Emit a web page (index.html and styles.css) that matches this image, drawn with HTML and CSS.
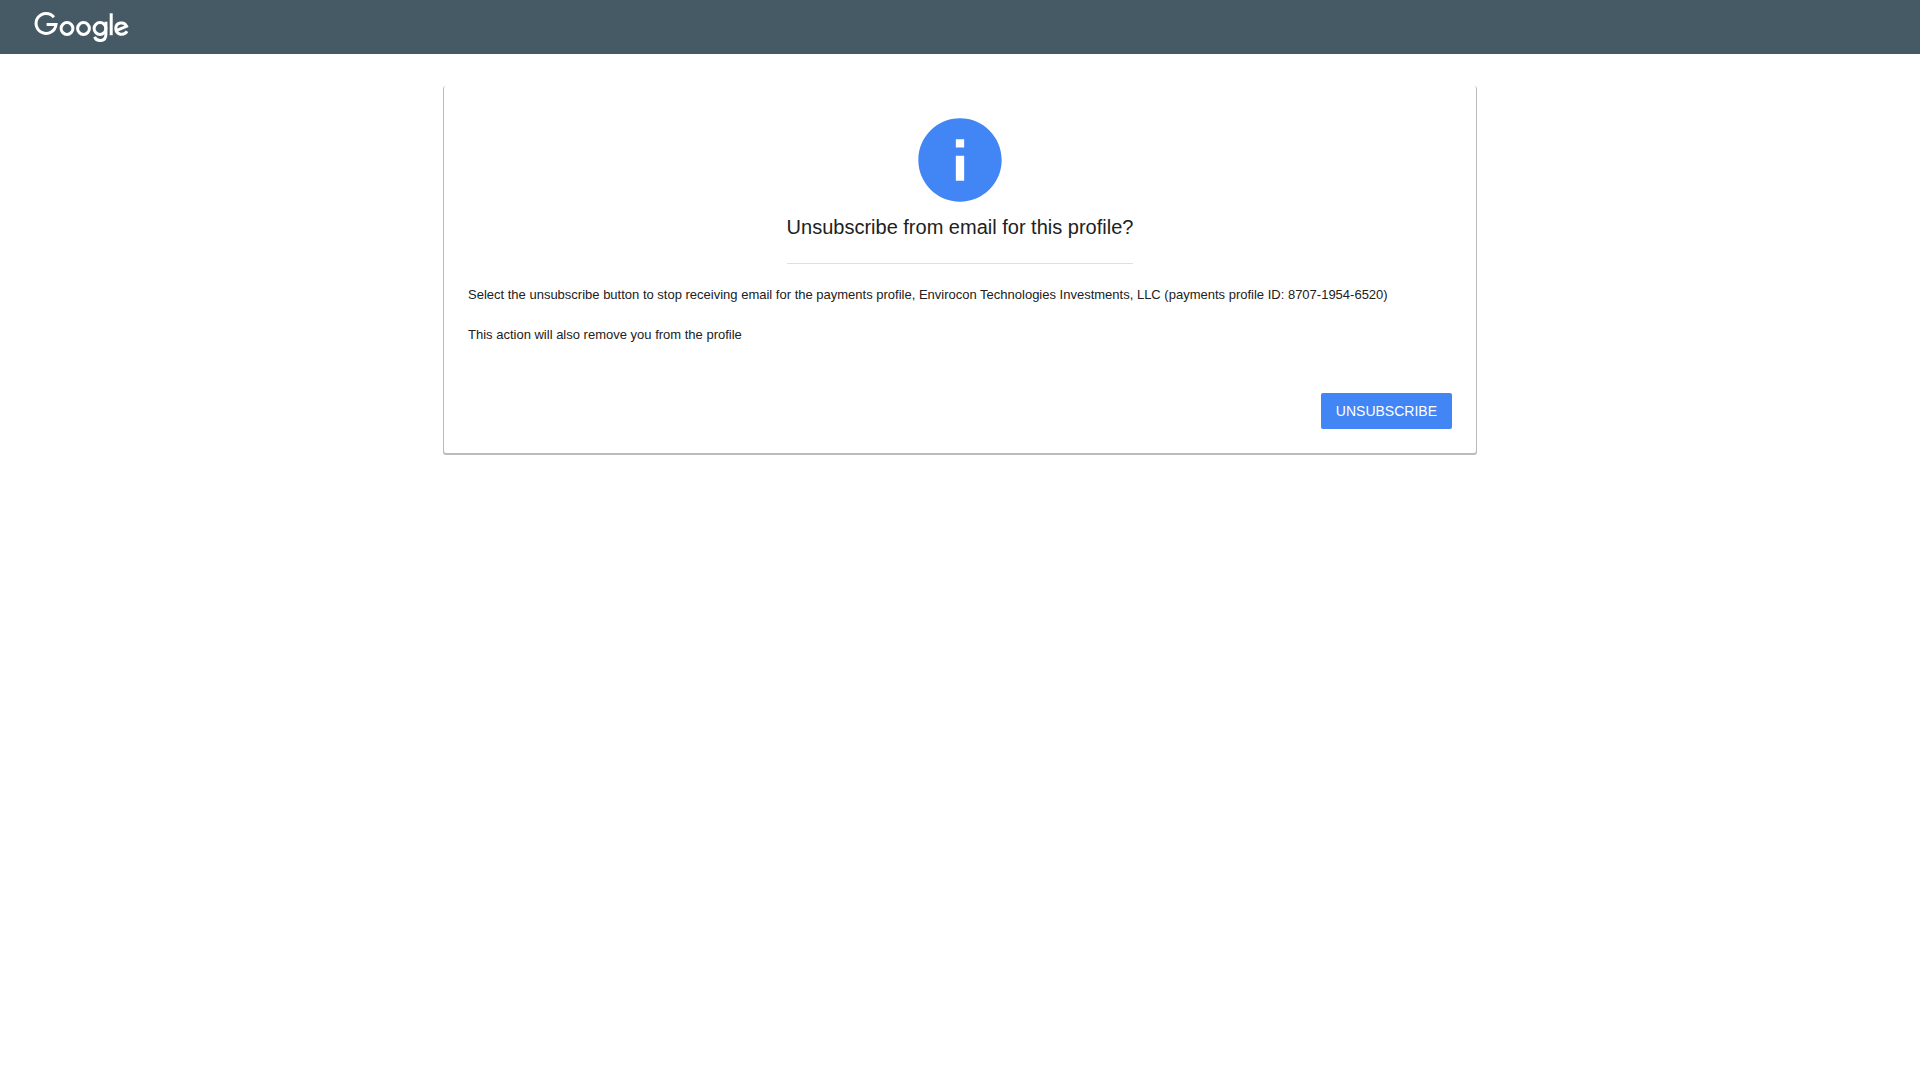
FILE: index.html
```html
<!DOCTYPE html>
<html lang="en">
<head>
    <meta charset="UTF-8">
    <meta name="viewport" content="width=device-width, initial-scale=1.0">
    <title>Unsubscribe</title>
    <link rel="stylesheet" href="styles.css">
</head>
<body>
    <header class="top-bar">
        <svg class="logo" viewBox="0 0 96 32" role="img" aria-label="Google">
            <g fill="none" stroke="#fff" stroke-width="3">
                <path d="M19.900 7.200A10 10 0 1 0 22 14.600H12.600"/>
                <circle cx="33" cy="18.500" r="5.900"/>
                <circle cx="49.500" cy="18.500" r="5.900"/>
                <circle cx="66" cy="18.500" r="5.900"/>
                <path d="M71.900 11.700V24.500C71.900 31.800 63 32.300 60.500 26.800"/>
                <path d="M77.200 3.300V25.200"/>
                <path d="M82.200 20.600L92.600 16.300C90.200 10.900 81.800 12.300 81.800 18.600C81.800 25 90 26.200 93 21.300"/>
            </g>
        </svg>
    </header>
    <main class="card">
        <div class="card-header">
            <svg class="info-icon" viewBox="0 0 24 24" aria-hidden="true">
                <path fill="#4285f4" d="M12 2C6.480 2 2 6.480 2 12s4.480 10 10 10 10-4.480 10-10S17.520 2 12 2zm1 15h-2v-6h2v6zm0-8h-2V7h2v2z"/>
            </svg>
            <h1>Unsubscribe from email for this profile?</h1>
        </div>
        <div class="card-body">
            <p>Select the unsubscribe button to stop receiving email for the payments profile, Envirocon Technologies Investments, LLC (payments profile ID: 8707-1954-6520)</p>
            <p>This action will also remove you from the profile</p>
        </div>
        <div class="card-actions">
            <button type="button" class="btn">UNSUBSCRIBE</button>
        </div>
    </main>
</body>
</html>
```
FILE: styles.css
```css
body {
    margin: 0;
    background-color: #fff;
    color: #212121;
    font-family: "Liberation Sans", Arial, sans-serif;
    font-size: 13px;
}
.top-bar {
    display: flex;
    background-color: #455a64;
    padding: 10px 34px 12px;
}
.logo {
    width: 96px;
    height: 32px;
    overflow: visible;
}
.card {
    max-width: 984px;
    margin: 32px auto;
    padding: 24px;
    background-color: #fff;
    border-radius: 2px;
    box-shadow: 0 1px 0 1px #bbb;
}
.card-header {
    display: flex;
    flex-direction: column;
    align-items: center;
}
.info-icon {
    width: 100px;
    height: 100px;
}
h1 {
    margin: 0;
    padding: 5px 0 24px;
    border-bottom: 1px solid #e0e0e0;
    font-size: 20px;
    font-weight: normal;
    line-height: 24px;
}
.card-body {
    padding-top: 1px;
}
.card-body p {
    margin: 20px 0;
    line-height: 20px;
}
.card-actions {
    display: flex;
    justify-content: flex-end;
    padding-top: 28px;
}
.btn {
    height: 36px;
    padding: 0 15px;
    border: none;
    border-radius: 2px;
    background-color: #4285f4;
    color: #fff;
    font-family: inherit;
    font-size: 14px;
    cursor: pointer;
}
```
